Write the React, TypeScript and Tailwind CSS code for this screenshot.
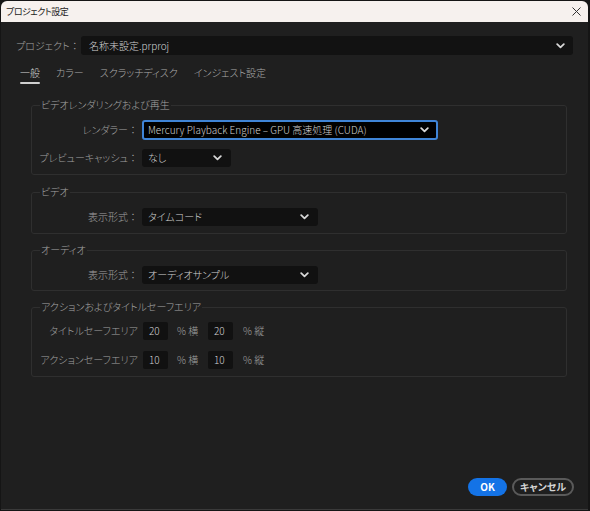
import React from "react";

const font = "font-['Noto_Sans_CJK_JP','Noto_Sans',sans-serif] [font-feature-settings:'palt'] font-light";

function Colon() {
  return <span className="[font-feature-settings:normal]">：</span>;
}

function Chevron() {
  return (
    <svg width="9" height="6" viewBox="0 0 9 6" className="shrink-0">
      <path d="M1.2 1.2 L4.5 4.3 L7.8 1.2" fill="none" stroke="#d8d8d8" strokeWidth="1.8" strokeLinecap="round" strokeLinejoin="round" />
    </svg>
  );
}

function Select({ value, w, focused = false, h = "h-[18px]" }: { value: string; w: string; focused?: boolean; h?: string }) {
  return (
    <div
      className={`${w} ${h} flex items-center justify-between rounded-[3px] ${
        focused ? "bg-black border-2 border-[#3f84d6] pl-[4px] pr-[7px]" : "bg-[#111111] pl-[6px] pr-[9px]"
      }`}
    >
      <span className="text-[10px] leading-none text-[#d2d2d2] whitespace-nowrap">{value}</span>
      <Chevron />
    </div>
  );
}

function Group({ title, children, className = "" }: { title: string; children: React.ReactNode; className?: string }) {
  return (
    <fieldset className={`border border-[#2f2f2f] rounded-[3px] ${className}`}>
      <legend className="ml-[8px] px-px text-[10px] leading-[16px] text-[#a4a4a4]">{title}</legend>
      {children}
    </fieldset>
  );
}

function Label({ children }: { children: React.ReactNode }) {
  return <div className="w-[106px] text-right text-[10px] leading-none text-[#a0a0a0] whitespace-nowrap">{children}</div>;
}

function NumBox({ v }: { v: string }) {
  return (
    <div className="w-[25px] h-[18px] bg-[#111111] rounded-[2px] flex items-center pl-[6px] text-[10px] leading-none text-[#d2d2d2]">
      {v}
    </div>
  );
}

export default function App() {
  return (
    <div className={`w-[590px] h-[511px] bg-[#151515] pt-px pl-px pr-[2px] pb-px ${font}`}>
      <div className="w-full h-full flex flex-col bg-[#1f1f1f] rounded-t-[6px] overflow-hidden border-b border-[#3a3a3a]">
        {/* title bar */}
        <div className="h-[21px] bg-[#f6f1ee] flex items-center justify-between pl-[5px] pr-[7px]">
          <span className="text-[9px] leading-none text-[#1c1c1c] font-normal tracking-[-0.5px]">プロジェクト設定</span>
          <svg width="9" height="9" viewBox="0 0 9 9">
            <path d="M0.5 0.5 L8.5 8.5 M8.5 0.5 L0.5 8.5" stroke="#333" strokeWidth="1" />
          </svg>
        </div>

        {/* project row */}
        <div className="mt-[14px] flex items-center pl-[15px] pr-[15px]">
          <span className="w-[65px] text-[10px] leading-none text-[#a0a0a0] whitespace-nowrap">
            プロジェクト<Colon />
          </span>
          <div className="flex-1 h-[19px] bg-[#121212] rounded-[3px] flex items-center justify-between pl-[8px] pr-[8px]">
            <span className="text-[10px] leading-none text-[#d2d2d2]">名称未設定.prproj</span>
            <Chevron />
          </div>
        </div>

        {/* tabs */}
        <div className="mt-[11px] flex gap-[16px] pl-[19px] text-[10px]">
          <div className="flex flex-col items-center">
            <span className="leading-[14px] text-[#d6d6d6]">一般</span>
            <div className="mt-[2px] h-[2px] w-full bg-[#cfcfcf] rounded-full" />
          </div>
          <span className="leading-[14px] text-[#a8a8a8]">カラー</span>
          <span className="leading-[14px] text-[#a8a8a8]">スクラッチディスク</span>
          <span className="leading-[14px] text-[#a8a8a8]">インジェスト設定</span>
        </div>

        {/* groups */}
        <div className="mt-[13px] ml-[30px] w-[536px] flex flex-col">
          <Group title="ビデオレンダリングおよび再生" className="pt-[7px] pb-[7px]">
            <div className="flex items-center gap-[4px]">
              <Label>
                レンダラー<Colon />
              </Label>
              <Select value="Mercury Playback Engine – GPU 高速処理 (CUDA)" w="w-[296px]" h="h-[20px]" focused />
            </div>
            <div className="mt-[9px] flex items-center gap-[4px]">
              <Label>
                プレビューキャッシュ<Colon />
              </Label>
              <Select value="なし" w="w-[89px]" />
            </div>
          </Group>

          <Group title="ビデオ" className="mt-[9px] pt-[8px] pb-[7px]">
            <div className="flex items-center gap-[4px]">
              <Label>
                表示形式<Colon />
              </Label>
              <Select value="タイムコード" w="w-[176px]" />
            </div>
          </Group>

          <Group title="オーディオ" className="mt-[8px] pt-[8px] pb-[6px]">
            <div className="flex items-center gap-[4px]">
              <Label>
                表示形式<Colon />
              </Label>
              <Select value="オーディオサンプル" w="w-[176px]" />
            </div>
          </Group>

          <Group title="アクションおよびタイトルセーフエリア" className="mt-[8px] pt-[7px] pb-[7px]">
            <div className="flex items-center">
              <Label>タイトルセーフエリア</Label>
              <div className="ml-[5px] flex items-center">
                <NumBox v="20" />
                <span className="ml-[9px] w-[31px] text-[10px] leading-none text-[#a0a0a0]">% 横</span>
                <NumBox v="20" />
                <span className="ml-[10px] text-[10px] leading-none text-[#a0a0a0]">% 縦</span>
              </div>
            </div>
            <div className="mt-[11px] flex items-center">
              <Label>アクションセーフエリア</Label>
              <div className="ml-[5px] flex items-center">
                <NumBox v="10" />
                <span className="ml-[9px] w-[31px] text-[10px] leading-none text-[#a0a0a0]">% 横</span>
                <NumBox v="10" />
                <span className="ml-[10px] text-[10px] leading-none text-[#a0a0a0]">% 縦</span>
              </div>
            </div>
          </Group>
        </div>

        <div className="flex-1" />

        {/* buttons */}
        <div className="flex justify-end gap-[5px] pr-[14px] pb-[13px]">
          <button className="w-[39px] h-[18px] rounded-full bg-[#1473e6] text-white text-[10px] font-bold leading-none">OK</button>
          <button className="w-[62px] h-[18px] rounded-full border-2 border-[#5a5a5a] text-[#d4d4d4] text-[10px] font-bold leading-none">キャンセル</button>
        </div>
      </div>
    </div>
  );
}
